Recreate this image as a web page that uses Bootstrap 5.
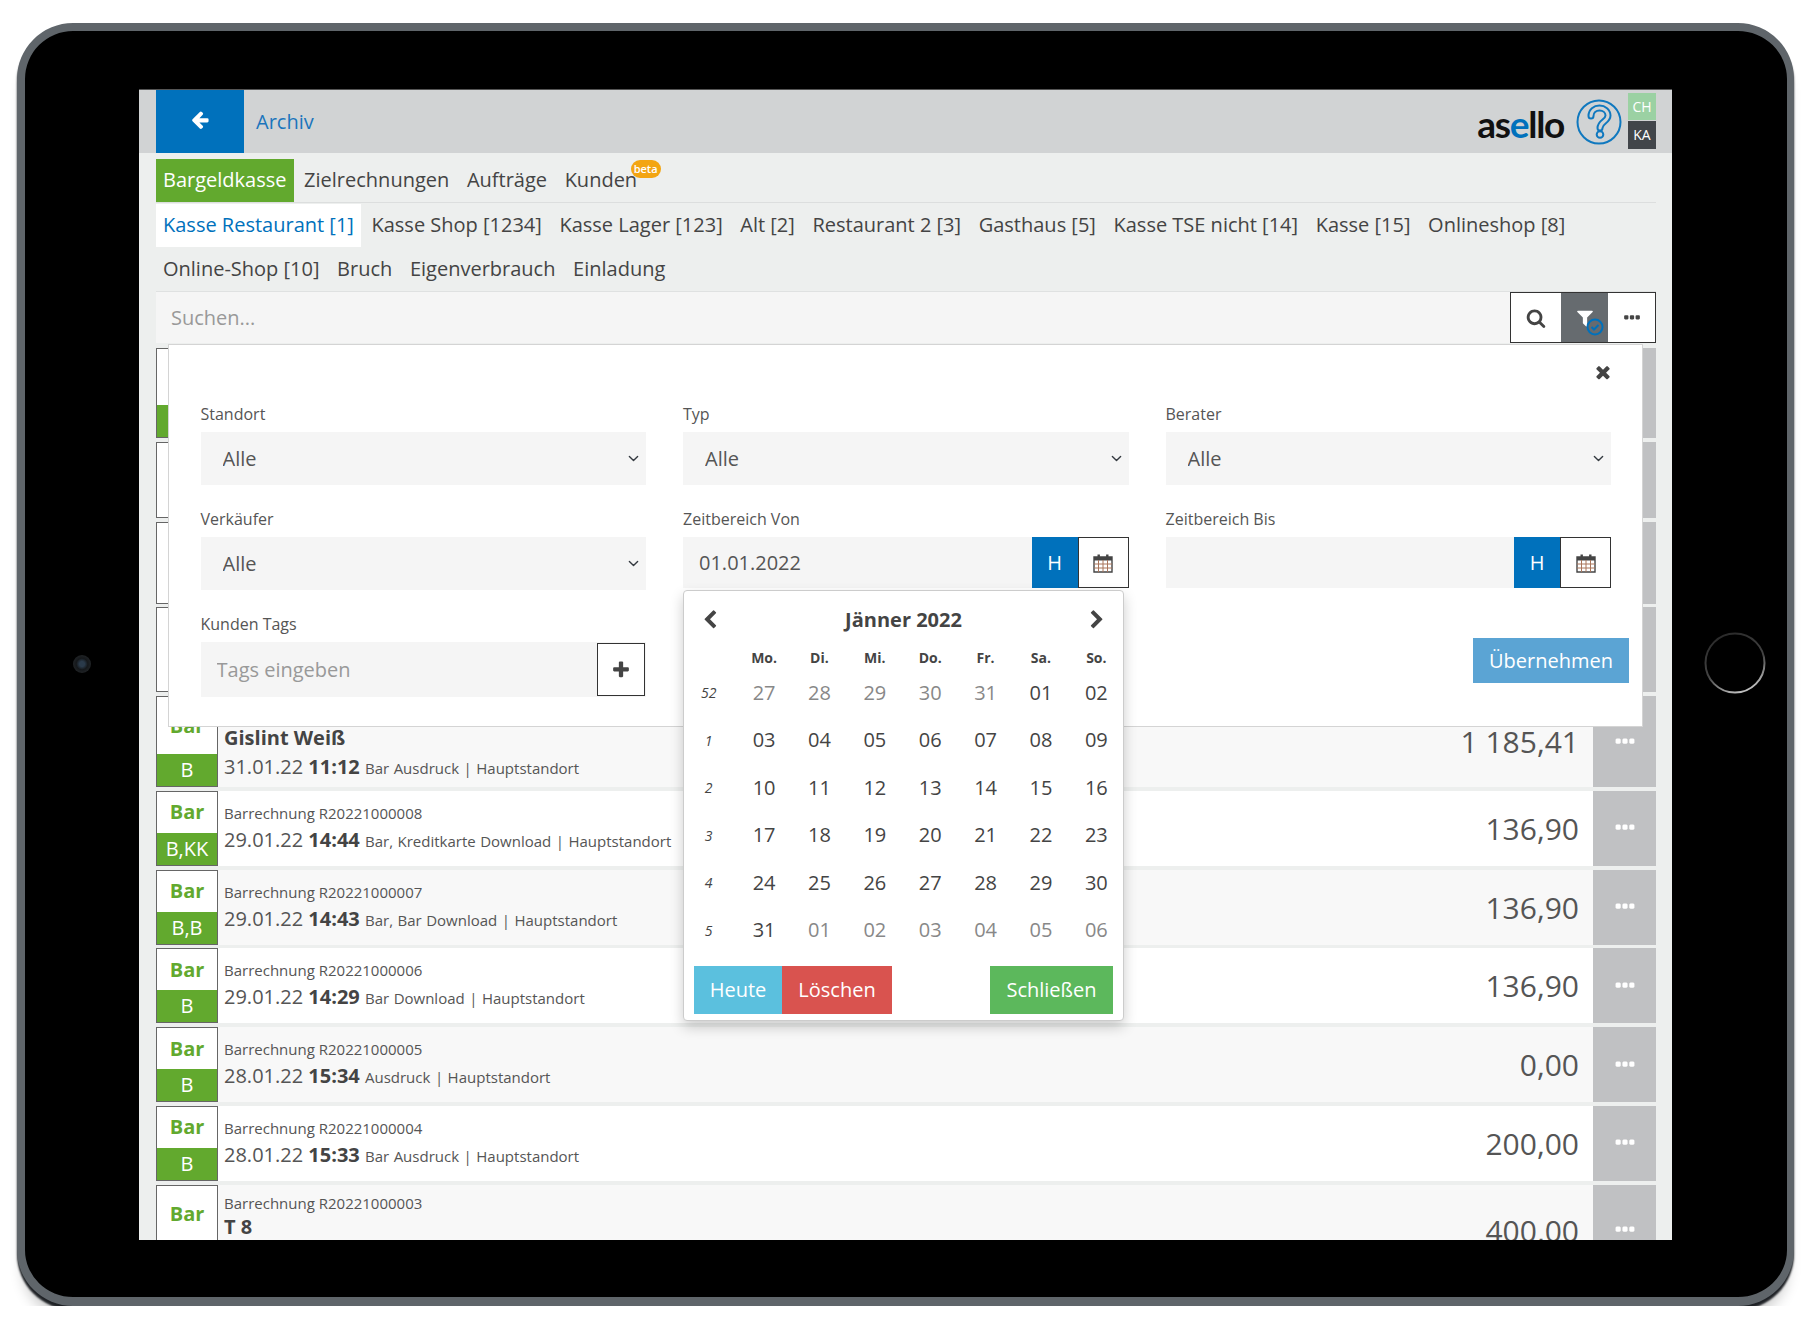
<!DOCTYPE html>
<html lang="de">
<head>
  <meta charset="UTF-8">
  <title>asello – Archiv</title>
  <link href="https://cdn.jsdelivr.net/npm/bootstrap@5.3.0/dist/css/bootstrap.min.css" rel="stylesheet">
  <style>
    body { background: #fff; font-family: "Open Sans", sans-serif; color: #444; overflow: hidden; font-size: 20px; }
    .ico { fill: currentColor; display: block; }
    .keep-w { flex: none; }

    /* tablet frame */
    .tablet { position: relative; width: 1777px; height: 1283px; margin: 23px 0 0 17px; padding: 58px 0 0 114px; background: #000; border: 8px solid #5f656a; border-right-width: 7px; border-bottom-width: 9px; border-radius: 56px; box-shadow: 0 4px 2px #1f2226, 0 18px 14px -6px rgba(0,0,0,.2); }
    .camera { position: absolute; left: 48px; top: 624px; width: 18px; height: 18px; border-radius: 50%; background: radial-gradient(circle, #2a3a4a 20%, #15181b 45%, #2c2f31 100%); }
    .home-btn { position: absolute; left: 1679px; top: 601px; }

    /* screen */
    .screen { width: 1533px; height: 1151px; background: #edefee; overflow: hidden; border-top: 1px solid #555; }
    .topbar { height: 63px; background: #d1d3d4; padding: 0 16px 0 17px; }
    .back-btn { width: 88px; height: 64px; margin-top: -1px; background: #0071bc; color: #fff; }
    .page-title { color: #1b75bc; margin-left: 12px; }
    .logo-text { font-family: Lato, sans-serif; font-weight: 700; font-size: 37px; line-height: 1; color: #111; letter-spacing: -1.3px; margin-top: 4px; }
    .logo-text span { color: #0071bc; }
    .help-ico { margin: 0 6px 0 12px; }
    .mini-tags { width: 28px; margin-top: 3px; }
    .mini-tags div { height: 27px; font-size: 14px; line-height: 27px; text-align: center; color: #fff; }
    .tag-ch { background: #9bd1a3; }
    .mini-tags .tag-ka { background: #41454a; height: 28px; margin-top: 1px; }

    .content { padding: 6px 16px 0 17px; position: relative; }
    .tabline { border-bottom: 1px solid #dcdede; }
    .tabline .nav-link, .tabline2 .nav-link { color: #444; padding: 0 7px; height: 43px; line-height: 42px; border-radius: 0; margin-right: 3.6px; position: relative; }
    .tabline .nav-link.active { background: #62a92e; color: #fff; }
    .tabline2 { border-bottom: 1px solid #dfe1e1; padding-top: 1px; row-gap: 1px; }
    .tabline2 .nav-link.active { background: #fff; color: #0071bc; }
    .beta-tag { position: absolute; left: 73px; top: 1px; width: 30px; height: 18px; padding: 0; background: #f3a512; font-size: 11px; line-height: 18px; font-weight: 600; }

    .search-bar { height: 51px; background: #f5f5f5; }
    .search-bar .form-control { background: transparent; border: 0; border-radius: 0; font-size: 20px; padding-left: 15px; color: #444; box-shadow: none; }
    .form-control::placeholder { color: #999; }
    .tool-group { border: 1px solid #333; background: #fff; height: 51px; }
    .tool-btn { height: 100%; width: 47px; padding: 0; border: 0; border-radius: 0; background: #fff; color: #444; }
    .tool-btn.search-tool { width: 50px; }
    .tool-btn.filter-tool { background: #666b6f; color: #fff; position: relative; }
    .tool-check { position: absolute; left: 25px; top: 25px; }

    /* list */
    .inv-list { display: flex; flex-direction: column; gap: 3.75px; margin-top: 5px; }
    .inv-row { display: flex; background: #fff; height: 75px; }
    .inv-row.alt { background: #f8f8f8; }
    .h-a { height: 90px; } .h-b { height: 76px; } .h-c { height: 82px; } .h-d { height: 85px; } .h-e { height: 91px; }
    .pay-box { width: 62px; flex: none; border: 1px solid #666; background: #fff; display: flex; flex-direction: column; text-align: center; }
    .pay-top { flex: 1; color: #62a92e; font-weight: 700; line-height: 1; display: flex; align-items: center; justify-content: center; }
    .pay-bottom { height: 32px; background: #62a92e; color: #fff; line-height: 32px; }
    .inv-text { flex: 1; padding: 12px 0 0 6px; white-space: nowrap; }
    .h-e .inv-text { padding-top: 8px; }
    .inv-title { font-size: 15px; line-height: 20px; color: #555; }
    .inv-name { font-weight: 700; line-height: 27px; color: #444; }
    .inv-meta { line-height: 32px; color: #555; margin-top: 1px; }
    .h-e .inv-meta { margin-top: 0; }
    .inv-meta b { color: #444; }
    .inv-meta small { font-size: 15px; word-spacing: .6px; }
    .inv-amount { font-size: 30px; color: #555; padding-right: 14px; white-space: nowrap; }
    .inv-more { width: 63px; flex: none; background: #c0c1c3; color: #fff; }

    /* filter panel */
    .filter-panel { position: absolute; left: 29px; top: 191px; width: 1475px; height: 383px; z-index: 5; background: #fff; border: 1px solid #d4d4d4; padding: 0 31px 0 31.5px; }
    .close-line { height: 58px; padding-top: 17px; margin-right: -2px; color: #444; }
    .filter-grid { --bs-gutter-x: 37px; --bs-gutter-y: 0; }
    .filter-col { height: 105px; }
    .filter-label { display: block; font-size: 16px; line-height: 22px; margin: 0 0 7px; color: #555; }
    .filter-panel .form-select, .filter-panel .form-control { background-color: #f5f5f5; border: 0; border-radius: 0; font-size: 20px; color: #555; box-shadow: none; }
    .filter-panel .form-select { height: 53px; padding-left: 22px; background-position: right 5px center; background-size: 15px 11px; }
    .date-line { height: 51px; position: relative; }
    .date-line .form-control { padding-left: 16px; }
    .h-btn { width: 46px; padding: 0; border: 0; border-radius: 0; background: #0071bc; color: #fff; font-size: 20px; }
    .cal-btn { width: 51px; padding: 0; border: 1px solid #333; border-radius: 0; background: #fff; color: #444; }
    .tag-line { height: 55px; background: #f5f5f5; }
    .tag-line .form-control { padding-left: 16px; }
    .plus-btn { width: 48px; height: 53px; margin: 1px 1px 0 0; padding: 0; border: 1px solid #333; border-radius: 0; background: #fff; color: #444; }
    .apply-btn { width: 156px; height: 45px; margin: 25px -18px 0 0; padding: 0; border: 1px solid #5ba4d4; border-radius: 0; background: #5ba4d4; color: #fff; font-size: 20px; }

    /* calendar popup */
    .cal-pop { position: absolute; left: 0; top: 53px; width: 441px; height: 431px; z-index: 10; background: #fff; border: 1px solid #ccc; border-radius: 4px; box-shadow: 0 6px 14px rgba(0,0,0,.2); }
    .cal-head { height: 57px; padding: 0 16px; font-weight: 700; }
    .cal-table { margin: 0 0 0 -3px; width: 443px; table-layout: fixed; }
    .cal-table th, .cal-table td { padding: 0; border: 0; text-align: center; color: #444; background: none; box-shadow: none; }
    .cal-table th { font-size: 14px; height: 21px; line-height: 20px; font-weight: 700; vertical-align: top; }
    .cal-table td { height: 47.5px; vertical-align: middle; }
    .cal-table td.wk { font-size: 14px; font-style: italic; }
    .cal-table td.off { color: #888; }
    .cal-foot { padding: 12px 10px 0; }
    .cal-foot .btn { height: 48px; padding: 0; border-radius: 0; border: 0; color: #fff; font-size: 20px; }
    .btn-heute { width: 88px; background: #5bc0de; }
    .btn-loeschen { width: 110px; background: #d9534f; }
    .btn-schliessen { width: 123px; background: #5cb85c; }
  </style>
</head>
<body>

  <svg width="0" height="0" class="position-absolute">
    <symbol id="i-arrow" viewBox="0 0 1792 1792"><path d="M1664 896v128q0 53-32.5 90.5t-84.5 37.5h-704l293 294q38 36 38 90t-38 90l-75 76q-37 37-90 37-52 0-91-37l-651-652q-37-37-37-90 0-52 37-91l651-650q38-38 91-38 52 0 90 38l75 74q38 38 38 91t-38 91l-293 293h704q52 0 84.5 37.5t32.5 90.5z" transform="translate(0 -128)"/></symbol>
    <symbol id="i-search" viewBox="0 0 1792 1792"><path d="M1216 832q0-185-131.5-316.5t-316.5-131.5-316.5 131.5-131.5 316.5 131.5 316.5 316.5 131.5 316.5-131.5 131.5-316.5zm512 832q0 52-38 90t-90 38q-54 0-90-38l-343-342q-179 124-399 124-143 0-273.5-55.5t-225-150-150-225-55.5-273.5 55.5-273.5 150-225 225-150 273.5-55.5 273.5 55.5 225 150 150 225 55.5 273.5q0 220-124 399l343 343q37 37 37 90z"/></symbol>
    <symbol id="i-filter" viewBox="0 0 1792 1792"><path d="M1595 295q17 41-14 70l-493 493v742q0 42-39 59-13 5-25 5-27 0-45-19l-256-256q-19-19-19-45v-486l-493-493q-31-29-14-70 17-39 59-39h1280q42 0 59 39z"/></symbol>
    <symbol id="i-dots" viewBox="0 0 1792 1792"><path d="M576 736v192q0 40-28 68t-68 28h-192q-40 0-68-28t-28-68v-192q0-40 28-68t68-28h192q40 0 68 28t28 68zm512 0v192q0 40-28 68t-68 28h-192q-40 0-68-28t-28-68v-192q0-40 28-68t68-28h192q40 0 68 28t28 68zm512 0v192q0 40-28 68t-68 28h-192q-40 0-68-28t-28-68v-192q0-40 28-68t68-28h192q40 0 68 28t28 68z"/></symbol>
    <symbol id="i-times" viewBox="0 0 1792 1792"><path d="M1490 1322q0 40-28 68l-136 136q-28 28-68 28t-68-28l-294-294-294 294q-28 28-68 28t-68-28l-136-136q-28-28-28-68t28-68l294-294-294-294q-28-28-28-68t28-68l136-136q28-28 68-28t68 28l294 294 294-294q28-28 68-28t68 28l136 136q28 28 28 68t-28 68l-294 294 294 294q28 28 28 68z"/></symbol>
    <symbol id="i-plus" viewBox="0 0 1792 1792"><path d="M1600 736v192q0 40-28 68t-68 28h-416v416q0 40-28 68t-68 28h-192q-40 0-68-28t-28-68v-416h-416q-40 0-68-28t-28-68v-192q0-40 28-68t68-28h416v-416q0-40 28-68t68-28h192q40 0 68 28t28 68v416h416q40 0 68 28t28 68z"/></symbol>
    <symbol id="i-left" viewBox="0 0 1792 1792"><path d="M1427 301l-531 531 531 531q19 19 19 45t-19 45l-166 166q-19 19-45 19t-45-19l-742-742q-19-19-19-45t19-45l742-742q19-19 45-19t45 19l166 166q19 19 19 45t-19 45z"/></symbol>
    <symbol id="i-right" viewBox="0 0 1792 1792"><path d="M1363 877l-742 742q-19 19-45 19t-45-19l-166-166q-19-19-19-45t19-45l531-531-531-531q-19-19-19-45t19-45l166-166q19-19 45-19t45 19l742 742q19 19 19 45t-19 45z"/></symbol>
    <symbol id="i-cal" viewBox="0 0 20 20">
      <path d="M1 4h18v15H1z" fill="none" stroke="currentColor" stroke-width="1.4"/>
      <path d="M1 4h18v3.4H1zM4.500 1.500h2.400v4H4.500zM13.100 1.500h2.400v4h-2.400z"/>
      <path d="M1 11h18M1 15h18M5.500 7v12M10 7v12M14.500 7v12" fill="none" stroke="#a9745a" stroke-width="1"/>
    </symbol>
  </svg>

  <div class="tablet">
    <div class="camera"></div>
    <svg class="home-btn" width="62" height="62" viewBox="0 0 62 62">
      <defs><linearGradient id="ringGrad" x1="0.7" y1="1" x2="0.3" y2="0"><stop offset="0" stop-color="#c9c9c9"/><stop offset=".45" stop-color="#444"/><stop offset="1" stop-color="#2a2a2a"/></linearGradient></defs>
      <circle cx="31" cy="31" r="29.5" fill="none" stroke="url(#ringGrad)" stroke-width="2"/>
    </svg>

    <div class="screen">
      <!-- Header -->
      <div class="topbar d-flex align-items-start">
        <div class="back-btn d-flex align-items-center justify-content-center">
          <svg class="ico" width="20" height="20"><use href="#i-arrow"/></svg>
        </div>
        <div class="page-title align-self-center">Archiv</div>
        <div class="ms-auto d-flex align-items-center align-self-stretch">
          <div class="logo-text">as<span>e</span>llo</div>
          <svg class="help-ico" width="46" height="46" viewBox="0 0 46 46">
            <circle cx="23" cy="23" r="21.5" fill="none" stroke="#0f78bf" stroke-width="2"/>
            <path d="M15 17c0-5 4-8 8.500-8s8.500 3 8.500 7.500c0 6-8 6-8 12.500" fill="none" stroke="#0f78bf" stroke-width="7" stroke-linecap="round"/>
            <path d="M15 17c0-5 4-8 8.500-8s8.500 3 8.500 7.500c0 6-8 6-8 12.500" fill="none" stroke="#d1d3d4" stroke-width="3" stroke-linecap="round"/>
            <circle cx="24" cy="35.500" r="3.300" fill="#d1d3d4" stroke="#0f78bf" stroke-width="2"/>
          </svg>
          <div class="mini-tags align-self-start"><div class="tag-ch">CH</div><div class="tag-ka">KA</div></div>
        </div>
      </div>

      <div class="content">
        <!-- Tabs -->
        <ul class="nav tabline">
          <li class="nav-item"><a class="nav-link active" href="#">Bargeldkasse</a></li>
          <li class="nav-item"><a class="nav-link" href="#">Zielrechnungen</a></li>
          <li class="nav-item"><a class="nav-link" href="#">Aufträge</a></li>
          <li class="nav-item"><a class="nav-link" href="#">Kunden<span class="badge rounded-pill beta-tag">beta</span></a></li>
        </ul>
        <ul class="nav tabline2">
          <li class="nav-item"><a class="nav-link active" href="#">Kasse Restaurant [1]</a></li>
          <li class="nav-item"><a class="nav-link" href="#">Kasse Shop [1234]</a></li>
          <li class="nav-item"><a class="nav-link" href="#">Kasse Lager [123]</a></li>
          <li class="nav-item"><a class="nav-link" href="#">Alt [2]</a></li>
          <li class="nav-item"><a class="nav-link" href="#">Restaurant 2 [3]</a></li>
          <li class="nav-item"><a class="nav-link" href="#">Gasthaus [5]</a></li>
          <li class="nav-item"><a class="nav-link" href="#">Kasse TSE nicht [14]</a></li>
          <li class="nav-item"><a class="nav-link" href="#">Kasse [15]</a></li>
          <li class="nav-item"><a class="nav-link" href="#">Onlineshop [8]</a></li>
          <li class="nav-item"><a class="nav-link" href="#">Online-Shop [10]</a></li>
          <li class="nav-item"><a class="nav-link" href="#">Bruch</a></li>
          <li class="nav-item"><a class="nav-link" href="#">Eigenverbrauch</a></li>
          <li class="nav-item"><a class="nav-link" href="#">Einladung</a></li>
        </ul>

        <!-- Search -->
        <div class="search-bar d-flex">
          <input type="text" class="form-control" placeholder="Suchen...">
          <div class="tool-group d-flex keep-w">
            <button class="btn tool-btn search-tool d-flex align-items-center justify-content-center" type="button"><svg class="ico" width="20" height="20"><use href="#i-search"/></svg></button>
            <button class="btn tool-btn filter-tool d-flex align-items-center justify-content-center" type="button">
              <svg class="ico" width="20" height="20"><use href="#i-filter"/></svg>
              <svg class="tool-check" width="18" height="18" viewBox="0 0 18 18"><circle cx="9" cy="9" r="7.500" fill="none" stroke="#0071bc" stroke-width="2"/><path d="M5.500 9l2.500 2.500 4.500-4.500" fill="none" stroke="#0071bc" stroke-width="2"/></svg>
            </button>
            <button class="btn tool-btn d-flex align-items-center justify-content-center" type="button"><svg class="ico" width="20" height="20"><use href="#i-dots"/></svg></button>
          </div>
        </div>

        <!-- List -->
        <div class="inv-list" id="inv-list"></div>

        <!-- Filter panel -->
        <div class="filter-panel">
          <div class="close-line d-flex justify-content-end"><svg class="ico" width="20" height="20"><use href="#i-times"/></svg></div>
          <div class="row filter-grid">
            <div class="col-4 filter-col">
              <label class="filter-label">Standort</label>
              <select class="form-select"><option>Alle</option></select>
            </div>
            <div class="col-4 filter-col">
              <label class="filter-label">Typ</label>
              <select class="form-select"><option>Alle</option></select>
            </div>
            <div class="col-4 filter-col">
              <label class="filter-label">Berater</label>
              <select class="form-select"><option>Alle</option></select>
            </div>

            <div class="col-4 filter-col">
              <label class="filter-label">Verkäufer</label>
              <select class="form-select"><option>Alle</option></select>
            </div>
            <div class="col-4 filter-col">
              <label class="filter-label">Zeitbereich Von</label>
              <div class="date-line d-flex">
                <input type="text" class="form-control" value="01.01.2022">
                <button class="btn h-btn keep-w" type="button">H</button>
                <button class="btn cal-btn keep-w d-flex align-items-center justify-content-center" type="button"><svg class="ico" width="20" height="20"><use href="#i-cal"/></svg></button>
                <div class="cal-pop">
                  <div class="cal-head d-flex align-items-center justify-content-between">
                    <svg class="ico" width="20" height="20"><use href="#i-left"/></svg>
                    <span>Jänner 2022</span>
                    <svg class="ico" width="20" height="20"><use href="#i-right"/></svg>
                  </div>
                  <table class="table cal-table">
                    <thead><tr><th></th><th>Mo.</th><th>Di.</th><th>Mi.</th><th>Do.</th><th>Fr.</th><th>Sa.</th><th>So.</th></tr></thead>
                    <tbody id="cal-body"></tbody>
                  </table>
                  <div class="cal-foot d-flex">
                    <button class="btn btn-heute" type="button">Heute</button>
                    <button class="btn btn-loeschen" type="button">Löschen</button>
                    <button class="btn btn-schliessen ms-auto" type="button">Schließen</button>
                  </div>
                </div>
              </div>
            </div>
            <div class="col-4 filter-col">
              <label class="filter-label">Zeitbereich Bis</label>
              <div class="date-line d-flex">
                <input type="text" class="form-control">
                <button class="btn h-btn keep-w" type="button">H</button>
                <button class="btn cal-btn keep-w d-flex align-items-center justify-content-center" type="button"><svg class="ico" width="20" height="20"><use href="#i-cal"/></svg></button>
              </div>
            </div>

            <div class="col-4">
              <label class="filter-label">Kunden Tags</label>
              <div class="tag-line d-flex">
                <input type="text" class="form-control" placeholder="Tags eingeben">
                <button class="btn plus-btn keep-w d-flex align-items-center justify-content-center" type="button"><svg class="ico" width="20" height="20"><use href="#i-plus"/></svg></button>
              </div>
            </div>
            <div class="col-4"></div>
            <div class="col-4 d-flex justify-content-end align-items-start">
              <button class="btn apply-btn" type="button">Übernehmen</button>
            </div>
          </div>
        </div>
      </div>
    </div>
  </div>

  <script>
    // rows of the archive list, the first four sit mostly under the filter panel
    const rows = [
      { h: "h-a", pay: " " },
      { h: "h-b" },
      { h: "h-c" },
      { h: "h-d" },
      { h: "h-e", pay: "B", name: "Gislint Weiß", date: "31.01.22", time: "11:12", info: "Bar Ausdruck", amount: "1 185,41" },
      { pay: "B,KK", title: "Barrechnung R20221000008", date: "29.01.22", time: "14:44", info: "Bar, Kreditkarte Download", amount: "136,90" },
      { pay: "B,B", title: "Barrechnung R20221000007", date: "29.01.22", time: "14:43", info: "Bar, Bar Download", amount: "136,90" },
      { pay: "B", title: "Barrechnung R20221000006", date: "29.01.22", time: "14:29", info: "Bar Download", amount: "136,90" },
      { pay: "B", title: "Barrechnung R20221000005", date: "28.01.22", time: "15:34", info: "Ausdruck", amount: "0,00" },
      { pay: "B", title: "Barrechnung R20221000004", date: "28.01.22", time: "15:33", info: "Bar Ausdruck", amount: "200,00" },
      { h: "h-e", pay: "B", title: "Barrechnung R20221000003", name: "T 8", amount: "400,00" }
    ];

    const list = document.getElementById("inv-list");
    rows.forEach((r, i) => {
      let text = "";
      if (r.title) text += `<div class="inv-title">${r.title}</div>`;
      else if (r.name) text += `<div class="inv-title">&nbsp;</div>`;
      if (r.name) text += `<div class="inv-name">${r.name}</div>`;
      if (r.time) text += `<div class="inv-meta">${r.date} <b>${r.time}</b> <small>${r.info} | Hauptstandort</small></div>`;
      list.innerHTML += `
        <div class="inv-row ${r.h || ""} ${i % 2 === 0 ? "alt" : ""}">
          <div class="pay-box">
            <div class="pay-top">${r.title || r.name ? "Bar" : ""}</div>
            ${r.pay ? `<div class="pay-bottom">${r.pay}</div>` : ""}
          </div>
          <div class="inv-text">${text}</div>
          <div class="inv-amount align-self-center">${r.amount || ""}</div>
          <div class="inv-more d-flex align-items-center justify-content-center">
            <svg class="ico" width="24" height="24"><use href="#i-dots"/></svg>
          </div>
        </div>`;
    });

    // calendar days of Jänner 2022, previous and next month greyed out
    const weeks = [
      [52, "27 28 29 30 31", "01 02", ""],
      [1, "", "03 04 05 06 07 08 09", ""],
      [2, "", "10 11 12 13 14 15 16", ""],
      [3, "", "17 18 19 20 21 22 23", ""],
      [4, "", "24 25 26 27 28 29 30", ""],
      [5, "", "31", "01 02 03 04 05 06"]
    ];
    const cells = (s, cls) => s ? s.split(" ").map(d => `<td class="${cls}">${d}</td>`).join("") : "";
    document.getElementById("cal-body").innerHTML = weeks.map(w =>
      `<tr><td class="wk">${w[0]}</td>${cells(w[1], "off")}${cells(w[2], "")}${cells(w[3], "off")}</tr>`
    ).join("");
  </script>

</body>
</html>
